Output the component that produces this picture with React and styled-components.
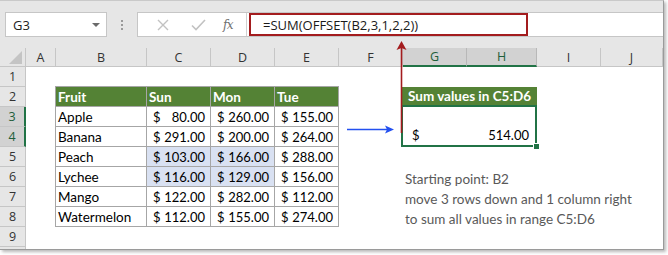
import React from "react";
import styled, { createGlobalStyle, css } from "styled-components";

const Global = createGlobalStyle`
  html, body { margin: 0; padding: 0; background: #ffffff; }
  #root { width: 668px; height: 255px; }
`;

const Window = styled.div`
  position: relative;
  box-sizing: border-box;
  width: 664px;
  height: 250px;
  border-top: 1px solid #c9c9c9;
  border-right: 1px solid #9a9a9a;
  border-bottom: 1px solid #9a9a9a;
  box-shadow: 2px 2px 3px rgba(0, 0, 0, 0.28);
  overflow: hidden;
  background: #ffffff;
  display: flex;
  flex-direction: column;
`;

const Toolbar = styled.div`
  height: 47px;
  flex: none;
  background: #e6e6e6;
  display: flex;
  align-items: center;
  padding-left: 5px;
`;

const NameBox = styled.div`
  box-sizing: border-box;
  width: 102px;
  height: 25px;
  background: #fff;
  border: 1px solid #c6c6c6;
  display: flex;
  align-items: center;
  justify-content: space-between;
  padding: 0 6px 0 7px;
  font-family: "Open Sans", sans-serif;
  font-size: 13px;
  color: #222;
`;

const Caret = styled.span`
  width: 0;
  height: 0;
  border-left: 4px solid transparent;
  border-right: 4px solid transparent;
  border-top: 4px solid #6a6a6a;
`;

const Dots = styled.div`
  width: 30px;
  display: flex;
  flex-direction: column;
  align-items: center;
  gap: 2px;
`;

const Dot = styled.span`
  width: 2px;
  height: 2px;
  background: #9a9a9a;
`;

const FormulaBox = styled.div`
  box-sizing: border-box;
  flex: 1;
  height: 25px;
  background: #fff;
  border: 1px solid #c6c6c6;
  border-right: none;
  display: flex;
  align-items: stretch;
`;

const IconArea = styled.div`
  box-sizing: border-box;
  width: 109px;
  border-right: 1px solid #d0d0d0;
  display: flex;
  align-items: center;
  padding-left: 13px;
`;

const IconSlot = styled.span`
  display: flex;
  align-items: center;
  justify-content: center;
  width: ${(p) => p.$w}px;
`;

const Fx = styled.span`
  font-family: "DejaVu Serif", "Liberation Serif", serif;
  font-style: italic;
  font-size: 12px;
  color: #6f6f6f;
  letter-spacing: -0.5px;
`;

const FormulaArea = styled.div`
  flex: 1;
  display: flex;
  align-items: stretch;
  padding-left: 2px;
`;

const Highlight = styled.div`
  box-sizing: border-box;
  width: 279px;
  border: 2px solid #a31c1e;
  display: flex;
  align-items: center;
  padding-left: 12px;
  font-family: "Open Sans", sans-serif;
  font-size: 13px;
  color: #1a1a1a;
`;

const Sheet = styled.div`
  display: grid;
  grid-template-columns: 26px 30px 91px 64px 64px 64px 64px 64px 70px 64px 62px;
  grid-template-rows: 19px repeat(10, 20px);
  flex: none;
`;

const headerFont = css`
  font-family: "Open Sans", sans-serif;
  font-size: 12.5px;
`;

const Corner = styled.div`
  grid-row: 1;
  grid-column: 1;
  background: #e6e6e6;
  box-sizing: border-box;
  border-right: 1px solid #c6c6c6;
  border-bottom: 1px solid #c6c6c6;
  display: flex;
  align-items: flex-end;
  justify-content: flex-end;
  padding: 0 3px 2px 0;
`;

const ColHeader = styled.div`
  grid-row: 1;
  grid-column: ${(p) => p.$col};
  box-sizing: border-box;
  background: ${(p) => (p.$sel ? "#d2d2d2" : "#e6e6e6")};
  border-right: 1px solid ${(p) => (p.$sel ? "#b8b8b8" : "#c6c6c6")};
  border-bottom: ${(p) => (p.$sel ? "2px solid #217346" : "1px solid #c6c6c6")};
  color: ${(p) => (p.$sel ? "#1e5e3a" : "#333")};
  display: flex;
  align-items: center;
  justify-content: center;
  ${headerFont};
`;

const RowHeader = styled.div`
  grid-column: 1;
  grid-row: ${(p) => p.$row};
  box-sizing: border-box;
  background: ${(p) => (p.$sel ? "#d2d2d2" : "#e6e6e6")};
  border-bottom: 1px solid #c6c6c6;
  border-right: ${(p) => (p.$sel ? "2px solid #217346" : "1px solid #c6c6c6")};
  color: ${(p) => (p.$sel ? "#1e5e3a" : "#333")};
  display: flex;
  align-items: center;
  justify-content: center;
  ${headerFont};
`;

const cellFont = css`
  font-family: Lato, "Open Sans", sans-serif;
  font-size: 13.5px;
`;

const DataTable = styled.div`
  grid-column: 3 / 7;
  grid-row: 3 / 10;
  margin: -1px 0 0 -1px;
  width: 284px;
  height: 141px;
  box-sizing: border-box;
  padding: 1px;
  background: #a6a6a6;
  display: grid;
  grid-template-columns: 90px 63px 63px 63px;
  grid-auto-rows: 19px;
  gap: 1px;
`;

const HeadCell = styled.div`
  background: #548235;
  color: #fff;
  font-weight: 700;
  display: flex;
  align-items: center;
  padding-left: 2px;
  ${cellFont};
`;

const TextCell = styled.div`
  background: #fff;
  color: #000;
  display: flex;
  align-items: center;
  padding-left: 2px;
  ${cellFont};
`;

const MoneyCell = styled.div`
  background: ${(p) => (p.$hl ? "#d9e1f2" : "#fff")};
  color: #000;
  display: flex;
  align-items: center;
  justify-content: space-between;
  gap: 3px;
  padding: 0 5px 0 6px;
  ${cellFont};
  font-size: 13px;
`;

const SumBlock = styled.div`
  grid-column: 8 / 10;
  grid-row: 3 / 6;
  margin-left: -2px;
  display: flex;
  flex-direction: column;
`;

const SumHeader = styled.div`
  height: 19px;
  background: #548235;
  color: #fff;
  font-weight: 700;
  display: flex;
  align-items: center;
  padding-left: 7px;
  ${cellFont};
`;

const SumBox = styled.div`
  position: relative;
  box-sizing: border-box;
  height: 43px;
  border: 2px solid #217346;
  display: flex;
  align-items: flex-end;
  justify-content: space-between;
  padding: 0 6px 2px 9px;
  color: #000;
  ${cellFont};
  font-size: 13px;
`;

const Handle = styled.span`
  position: absolute;
  right: -5px;
  bottom: -5px;
  width: 5px;
  height: 5px;
  background: #217346;
  border: 1px solid #fff;
`;

const Notes = styled.div`
  grid-column: 8 / 12;
  grid-row: 7 / 11;
  padding: 2px 0 0 2px;
  color: #595959;
  line-height: 20px;
  ${cellFont};
`;

const Overlay = styled.svg`
  position: absolute;
  left: ${(p) => p.$x}px;
  top: ${(p) => p.$y}px;
  overflow: visible;
`;

const cols = ["A", "B", "C", "D", "E", "F", "G", "H", "I", "J"];

const rows = [
  ["Apple", "80.00", "260.00", "155.00"],
  ["Banana", "291.00", "200.00", "264.00"],
  ["Peach", "103.00", "166.00", "288.00"],
  ["Lychee", "116.00", "129.00", "156.00"],
  ["Mango", "122.00", "282.00", "112.00"],
  ["Watermelon", "112.00", "155.00", "274.00"],
];

export default function App() {
  return (
    <>
      <Global />
      <Window>
        <Toolbar>
          <NameBox>
            <span>G3</span>
            <Caret />
          </NameBox>
          <Dots>
            <Dot />
            <Dot />
            <Dot />
          </Dots>
          <FormulaBox>
            <IconArea>
              <IconSlot $w={24}>
                <svg width="12" height="12" viewBox="0 0 12 12">
                  <path d="M1 1 L11 11 M11 1 L1 11" stroke="#c2c2c2" strokeWidth="1.4" fill="none" />
                </svg>
              </IconSlot>
              <IconSlot $w={46}>
                <svg width="15" height="12" viewBox="0 0 15 12">
                  <path d="M1 6.5 L5 10.5 L14 1" stroke="#c2c2c2" strokeWidth="1.6" fill="none" />
                </svg>
              </IconSlot>
              <IconSlot $w={14}>
                <Fx>fx</Fx>
              </IconSlot>
            </IconArea>
            <FormulaArea>
              <Highlight>=SUM(OFFSET(B2,3,1,2,2))</Highlight>
            </FormulaArea>
          </FormulaBox>
        </Toolbar>
        <Sheet>
          <Corner>
            <svg width="13" height="13" viewBox="0 0 13 13">
              <path d="M13 0 L13 13 L0 13 Z" fill="#c4c4c4" />
            </svg>
          </Corner>
          {cols.map((c, i) => (
            <ColHeader key={c} $col={i + 2} $sel={c === "G" || c === "H"}>
              {c}
            </ColHeader>
          ))}
          {Array.from({ length: 10 }, (_, i) => (
            <RowHeader key={i} $row={i + 2} $sel={i === 2 || i === 3}>
              {i < 9 ? i + 1 : ""}
            </RowHeader>
          ))}
          <DataTable>
            <HeadCell>Fruit</HeadCell>
            <HeadCell>Sun</HeadCell>
            <HeadCell>Mon</HeadCell>
            <HeadCell>Tue</HeadCell>
            {rows.map((r, ri) => (
              <React.Fragment key={r[0]}>
                <TextCell>{r[0]}</TextCell>
                {r.slice(1).map((v, ci) => (
                  <MoneyCell key={ci} $hl={(ri === 2 || ri === 3) && ci < 2}>
                    <span>$</span>
                    <span>{v}</span>
                  </MoneyCell>
                ))}
              </React.Fragment>
            ))}
          </DataTable>
          <SumBlock>
            <SumHeader>Sum values in C5:D6</SumHeader>
            <SumBox>
              <span>$</span>
              <span>514.00</span>
              <Handle />
            </SumBox>
          </SumBlock>
          <Notes>
            Starting point: B2
            <br />
            move 3 rows down and 1 column right
            <br />
            to sum all values in range C5:D6
          </Notes>
        </Sheet>
        <Overlay $x={396} $y={40} width="11" height="92" viewBox="0 0 11 92">
          <path d="M5.5 6 L5.5 92" stroke="#a31c1e" strokeWidth="1.6" />
          <path d="M5.5 0 L10.5 9 L5.5 7 L0.5 9 Z" fill="#a31c1e" />
        </Overlay>
        <Overlay $x={347} $y={124} width="47" height="9" viewBox="0 0 47 9">
          <path d="M0 4.5 L42 4.5" stroke="#2350f0" strokeWidth="1.4" />
          <path d="M47 4.5 L38 0.5 L40 4.5 L38 8.5 Z" fill="#2350f0" />
        </Overlay>
      </Window>
    </>
  );
}
